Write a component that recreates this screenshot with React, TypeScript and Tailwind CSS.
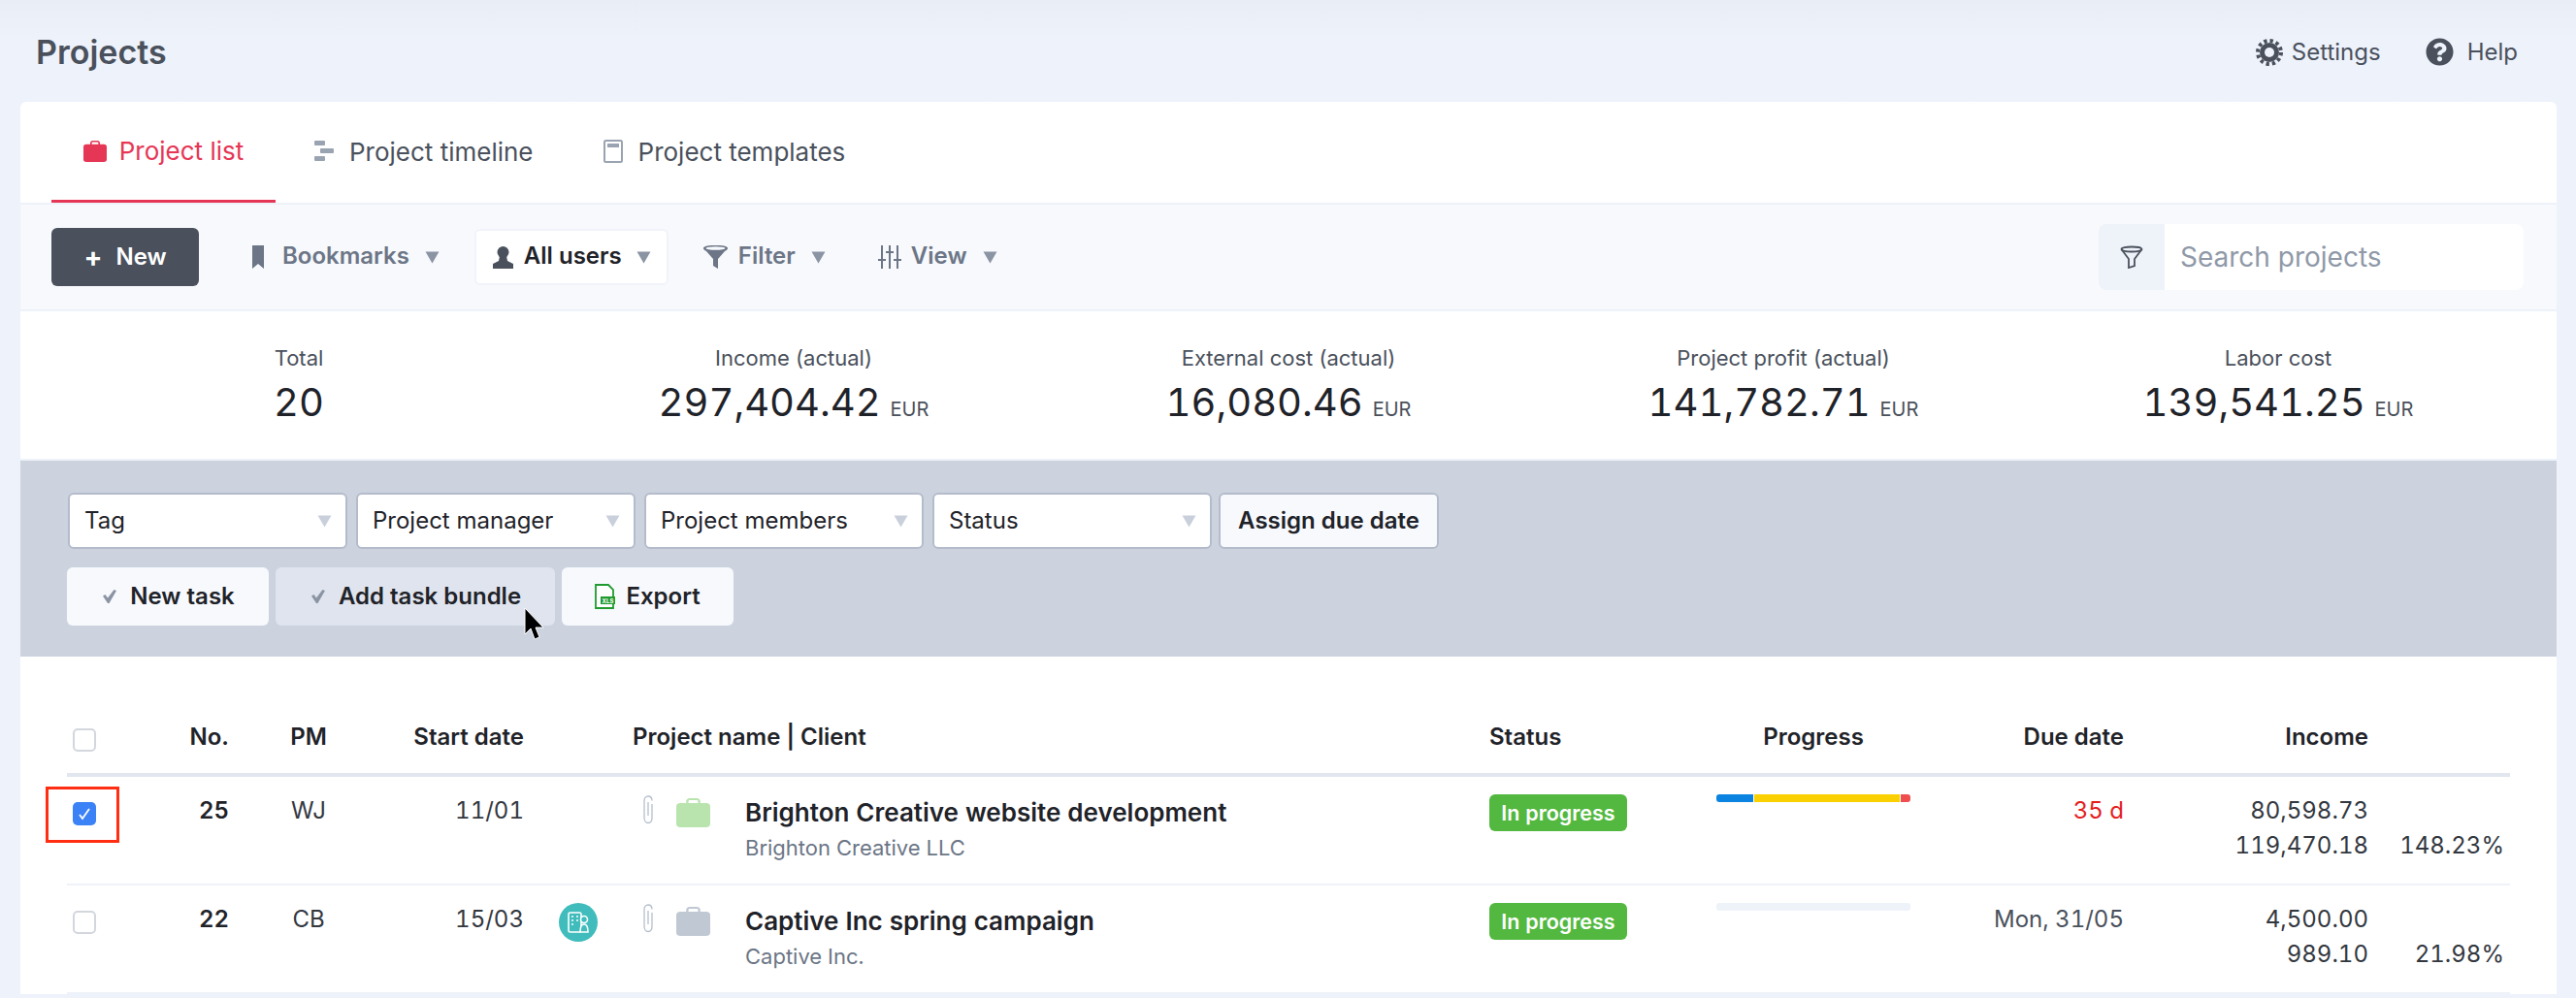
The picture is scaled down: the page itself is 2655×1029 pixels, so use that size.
import React from "react";
import { FaQuestionCircle } from "react-icons/fa";

const Caret = ({ className }: { className: string }) => (
  <svg viewBox="0 0 15 13" className={`w-[15px] h-[13px] ${className}`} fill="currentColor">
    <path d="M0.5 0.5H14.5L7.5 12.5Z" />
  </svg>
);

const BagIcon = ({ className }: { className: string }) => (
  <svg viewBox="0 0 24 24" preserveAspectRatio="none" className={className} fill="currentColor">
    <path d="M7 5V2.500C7 1.200 8 0 9.500 0h5C16 0 17 1.200 17 2.500V5h-1.600V2.600c0-.6-.4-1-1-1H9.600c-.6 0-1 .4-1 1V5z" />
    <rect x="0" y="4" width="24" height="20" rx="3" />
  </svg>
);

const PaperClip = () => (
  <svg viewBox="0 0 13 30" className="w-[13px] h-[30px] text-[#b6bfcd]" fill="none" stroke="currentColor" strokeWidth="1.3">
    <path d="M10 9v14c0 3-1.500 5.500-4 5.500S2 26 2 23V5.500C2 3 3.500 1 6 1s4 2 4 4.500" />
    <path d="M6 7v14" />
  </svg>
);

const Check = () => <div className="w-6 h-6 rounded-[5px] border-2 border-[#d3d7dd] bg-white" />;

const CheckSmall = () => (
  <svg viewBox="0 0 14 14" className="w-[14px] h-[14px] text-[#8b94a3]" fill="currentColor">
    <path d="M0 6.500l2.500-1.500 2.500 3.500L11.500 0 14 1 6.500 14h-1.500z" />
  </svg>
);

const tabs = [
  { label: "Project timeline", icon: "timeline" },
  { label: "Project templates", icon: "template" },
];

const SelectBox = ({ label }: { label: string }) => (
  <div className="w-[288px] h-[58px] bg-white rounded-[6px] border-2 border-[#b4bccb] flex items-center justify-between pl-[15px] pr-[14px] text-[24px] text-[#1f2329]">
    <span>{label}</span>
    <Caret className="text-[#c9d0dc]" />
  </div>
);

const stats = [
  { label: "Total", value: "20", unit: "" },
  { label: "Income (actual)", value: "297,404.42", unit: "EUR" },
  { label: "External cost (actual)", value: "16,080.46", unit: "EUR" },
  { label: "Project profit (actual)", value: "141,782.71", unit: "EUR" },
  { label: "Labor cost", value: "139,541.25", unit: "EUR" },
];

const gridCols = "grid grid-cols-[61px_106px_164px_140px_112px_883px_234px_200px_220px_252px_140px_6px]";

const rows = [
  {
    checked: true,
    no: "25",
    pm: "WJ",
    start: "11/01",
    teal: false,
    bag: "text-[#b9e4ae]",
    name: "Brighton Creative website development",
    client: "Brighton Creative LLC",
    due: "35 d",
    dueClass: "text-[#e41e1e]",
    income: "80,598.73",
    actual: "119,470.18",
    pct: "148.23%",
    progress: true,
  },
  {
    checked: false,
    no: "22",
    pm: "CB",
    start: "15/03",
    teal: true,
    bag: "text-[#c0c8d3]",
    name: "Captive Inc spring campaign",
    client: "Captive Inc.",
    due: "Mon, 31/05",
    dueClass: "text-[#4a515c]",
    income: "4,500.00",
    actual: "989.10",
    pct: "21.98%",
    progress: false,
  },
];

export default function App() {
  return (
    <div className="h-[1029px] overflow-hidden bg-gradient-to-b from-[#e9edf5] to-[#eef2fb] to-[40px] font-['Inter',sans-serif] text-[#1f2329]">
      {/* Top bar */}
      <header className="h-[105px] flex items-center justify-between pl-[37px] pr-[60px] pt-[2px]">
        <h1 className="text-[34px] font-semibold text-[#4a515c]">Projects</h1>
        <div className="flex items-center text-[24px] text-[#4a515c]">
          <svg viewBox="0 0 28 28" className="w-[28px] h-[28px] mr-[9px]">
            <circle cx="14" cy="14" r="10" fill="#4a515c" />
            <circle cx="14" cy="14" r="12" fill="none" stroke="#4a515c" strokeWidth="4" strokeDasharray="3.300 3" />
            <circle cx="14" cy="14" r="5" fill="#eef2fb" />
          </svg>
          <span>Settings</span>
          <FaQuestionCircle className="w-[29px] h-[29px] ml-[46px] mr-[14px]" />
          <span>Help</span>
        </div>
      </header>

      <main className="ml-[21px] w-[2614px] bg-white rounded-t-[6px]">
        {/* Tabs */}
        <div className="h-[106px] pl-[32px] flex border-b-2 border-[#eef2f9]">
          <div className="w-[231px] h-[104px] flex items-center justify-center gap-[13px] border-b-[3px] border-[#e63655] text-[#e63655] text-[26px]">
            <BagIcon className="w-[24px] h-[22px]" />
            <span>Project list</span>
          </div>
          {tabs.map((tab) => (
            <div key={tab.label} className="ml-[8px] px-[32px] pb-[2px] h-[104px] flex items-center gap-[16px] text-[26px] text-[#4a515c]">
              {tab.icon === "timeline" ? (
                <svg viewBox="0 0 20 22" className="w-[20px] h-[22px] text-[#9aa3b1]" fill="currentColor">
                  <rect x="0" y="0" width="11" height="5" rx="1" />
                  <rect x="6" y="8" width="14" height="5" rx="1" />
                  <rect x="0" y="16" width="11" height="5" rx="1" />
                </svg>
              ) : (
                <svg viewBox="0 0 20 24" className="w-[20px] h-[24px] text-[#9aa3b1]">
                  <rect x="1" y="1" width="18" height="22" rx="1.500" fill="none" stroke="currentColor" strokeWidth="2" />
                  <rect x="4" y="4" width="12" height="4" fill="currentColor" />
                </svg>
              )}
              <span>{tab.label}</span>
            </div>
          ))}
        </div>

        {/* Toolbar */}
        <div className="h-[110px] bg-[#f7f9fd] border-b-2 border-[#eef2f9] pl-[32px] pr-[34px] flex items-center text-[24px] font-semibold text-[#6c7686]">
          <button className="w-[152px] h-[60px] rounded-[6px] bg-[#4a515c] text-white flex items-center justify-center gap-[14px]">
            <span className="text-[28px] leading-none font-bold">+</span>
            <span>New</span>
          </button>
          <svg viewBox="0 0 12 24" className="w-[12px] h-[24px] ml-[55px] mr-[19px]" fill="#6c7686">
            <path d="M0 0h12v24l-6-5-6 5z" />
          </svg>
          <span className="-mt-[2px]">Bookmarks</span>
          <Caret className="ml-[16px] text-[#8b94a3]" />
          <div className="ml-[36px] w-[200px] h-[58px] bg-white rounded-[6px] border-2 border-[#f0f3f9] flex items-center pl-[16px] text-[#1f2329]">
            <svg viewBox="0 0 23 24" className="w-[23px] h-[24px] mr-[10px]" fill="#4a515c">
              <circle cx="11.500" cy="7" r="6" />
              <path d="M8 11h7l1 5 6 3v5H1v-5l6-3z" />
            </svg>
            <span className="-mt-[2px]">All users</span>
            <Caret className="ml-[15px] text-[#8b94a3]" />
          </div>
          <svg viewBox="0 0 25 24" className="w-[25px] h-[24px] ml-[36px] mr-[11px]" fill="#6c7686">
            <path d="M0 3c0-2.500 6-3 12.500-3S25 .5 25 3c0 1-1 1.800-3 3l-7 8v10l-5-3v-7L3 6C1 4.800 0 4 0 3z" />
            <ellipse cx="12.500" cy="3" rx="10" ry="1.800" fill="#f7f9fd" />
          </svg>
          <span className="-mt-[2px]">Filter</span>
          <Caret className="ml-[16px] text-[#8b94a3]" />
          <svg viewBox="0 0 24 24" className="w-[24px] h-[24px] ml-[54px] mr-[10px]" stroke="#6c7686" strokeWidth="2">
            <path d="M4 0v24M12 0v24M20 0v24" />
            <path d="M0 15h8M8 7h8M16 15h8" />
          </svg>
          <span className="-mt-[2px]">View</span>
          <Caret className="ml-[16px] text-[#8b94a3]" />
          <div className="ml-auto w-[438px] h-[68px] rounded-[8px] bg-white flex items-center overflow-hidden font-normal">
            <div className="w-[68px] h-full bg-[#eef2f9] flex items-center justify-center">
              <svg viewBox="0 0 24 24" className="w-[24px] h-[24px]" fill="none" stroke="#4a515c" strokeWidth="1.800">
                <ellipse cx="12" cy="4" rx="10.500" ry="2.500" />
                <path d="M1.500 4 9 14v9l6-2v-7l7.500-10" />
              </svg>
            </div>
            <span className="pl-[16px] text-[#8f99a8] text-[28px]">Search projects</span>
          </div>
        </div>

        {/* Summary */}
        <div className="h-[154px] px-[32px] pt-[8px] grid grid-cols-5 items-center border-b-2 border-[#eef2f9]">
          {stats.map((s) => (
            <div key={s.label} className="text-center">
              <div className="text-[22px] leading-[30px] text-[#4a515c]">{s.label}</div>
              <div className="leading-[52px] mt-[5px] tabular-nums">
                <span className="text-[40px]">{s.value}</span>
                {s.unit && <span className="ml-[10px] text-[20px] text-[#4a515c]">{s.unit}</span>}
              </div>
            </div>
          ))}
        </div>

        {/* Bulk action panel */}
        <div className="h-[202px] bg-[#ccd3df] pl-[48px] pt-[33px]">
          <div className="flex gap-[9px] pl-px">
            <SelectBox label="Tag" />
            <SelectBox label="Project manager" />
            <SelectBox label="Project members" />
            <SelectBox label="Status" />
            <button className="w-[227px] h-[58px] -ml-[2px] bg-[#f7f9fd] rounded-[6px] border-2 border-[#b4bccb] text-[24px] font-semibold">
              Assign due date
            </button>
          </div>
          <div className="flex gap-[7px] mt-[19px] text-[24px] font-semibold">
            <button className="w-[208px] h-[60px] pl-[2px] rounded-[6px] bg-[#f7f9fd] flex items-center justify-center gap-[14px]">
              <CheckSmall />
              New task
            </button>
            <button className="relative w-[288px] h-[60px] pl-[2px] rounded-[6px] bg-[#e0e4ee] flex items-center justify-center gap-[14px]">
              <CheckSmall />
              Add task bundle
              <svg viewBox="0 0 22 36" className="absolute left-[256px] top-[41px] w-[22px] h-[36px]" fill="#000" stroke="#fff" strokeWidth="1">
                <path d="M1 1v27l6-6 4 11 5-2-4-10h8z" />
              </svg>
            </button>
            <button className="w-[177px] h-[60px] rounded-[6px] bg-[#f7f9fd] flex items-center justify-center gap-[10px]">
              <svg viewBox="0 0 22 26" className="w-[22px] h-[26px]">
                <path d="M1 1h13l5 5v19H1z" fill="#fff" stroke="#1f9a2e" strokeWidth="1.800" />
                <rect x="6" y="13" width="15" height="8" fill="#1f9a2e" />
                <text x="13.500" y="19.500" textAnchor="middle" fontSize="6" fontWeight="700" fill="#fff">XLS</text>
              </svg>
              Export
            </button>
          </div>
        </div>

        {/* Table */}
        <div className="ml-[48px] w-[2518px] pt-[40px]">
          <div className={`${gridCols} h-[84px] pt-[25px] border-b-4 border-[#e1e6ef] text-[24px] font-semibold`}>
            <div className="pl-[6px] pt-[9px]"><Check /></div>
            <div className="text-right">No.</div>
            <div className="text-center">PM</div>
            <div className="text-right">Start date</div>
            <div />
            <div>Project name | Client</div>
            <div>Status</div>
            <div className="text-center">Progress</div>
            <div className="text-right">Due date</div>
            <div className="text-right">Income</div>
          </div>
          {rows.map((r) => (
            <div key={r.no} className={`${gridCols} h-[112px] border-b-2 border-[#eef2f9] pt-[17px] text-[24px] leading-[36px] tabular-nums`}>
              <div className="relative pl-[6px] pt-[9px]">
                {r.checked ? (
                  <>
                    <div className="w-6 h-6 rounded-[5px] bg-[#3b82f6] flex items-center justify-center">
                      <svg viewBox="0 0 14 14" className="w-[14px] h-[14px]" fill="none" stroke="#fff" strokeWidth="1.800">
                        <path d="M2 8l3 4 7-10" />
                      </svg>
                    </div>
                    <div className="absolute left-[-22px] top-[-7px] w-[76px] h-[58px] border-[3px] border-[#ff2d12]" />
                  </>
                ) : (
                  <Check />
                )}
              </div>
              <div className="text-right font-semibold">{r.no}</div>
              <div className="text-center text-[#33383f]">{r.pm}</div>
              <div className="text-right text-[#33383f]">{r.start}</div>
              <div className="pl-[36px] pt-[1px]">
                {r.teal && (
                  <svg viewBox="0 0 40 40" className="w-[40px] h-[40px]">
                    <circle cx="20" cy="20" r="20" fill="#41bcbc" />
                    <rect x="10" y="10" width="13" height="20" rx="1.500" fill="none" stroke="#fff" strokeWidth="1.600" />
                    <path d="M13 14h2M18 14h2M13 18h2M18 18h2M13 22h2" stroke="#fff" strokeWidth="1.600" />
                    <circle cx="26" cy="17" r="3.500" fill="#41bcbc" stroke="#fff" strokeWidth="1.600" />
                    <path d="M22 30c0-5 1.500-8 4-8s4 3 4 8z" fill="#41bcbc" stroke="#fff" strokeWidth="1.600" />
                  </svg>
                )}
              </div>
              <div className="flex">
                <div className="pl-[10px] pt-[2px]"><PaperClip /></div>
                <div className="pl-[22px] pt-[5px]">
                  <BagIcon className={`w-[35px] h-[30px] ${r.bag}`} />
                </div>
                <div className="pl-[36px] pt-[2px]">
                  <div className="text-[26px] font-semibold">{r.name}</div>
                  <div className="text-[22px] text-[#6c7686]">{r.client}</div>
                </div>
              </div>
              <div className="pt-[1px]">
                <span className="flex items-center justify-center w-[142px] h-[38px] rounded-[6px] bg-[#52b83f] text-white text-[21.500px] font-semibold">
                  In progress
                </span>
              </div>
              <div className="pt-[1px]">
                {r.progress ? (
                  <div className="flex h-[8px] gap-[1px] overflow-hidden rounded-[3px]">
                    <div className="w-[38px] bg-[#0a84e0]" />
                    <div className="w-[150px] bg-[#fbd000]" />
                    <div className="flex-1 bg-[#ef4e4e]" />
                  </div>
                ) : (
                  <div className="h-[8px] rounded-[3px] bg-[#eef2f9]" />
                )}
              </div>
              <div className={`text-right ${r.dueClass}`}>{r.due}</div>
              <div className="text-right text-[#33383f]">
                <div>{r.income}</div>
                <div>{r.actual}</div>
              </div>
              <div className="text-right text-[#33383f] pt-[36px]">{r.pct}</div>
            </div>
          ))}
        </div>
      </main>
    </div>
  );
}
